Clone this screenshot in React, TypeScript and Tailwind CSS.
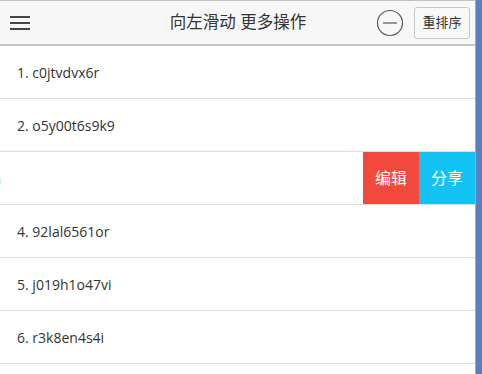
import type { ReactNode } from "react";

const items = [
  "c0jtvdvx6r",
  "o5y00t6s9k9",
  "k2m7q1x8pa",
  "92lal6561or",
  "j019h1o47vi",
  "r3k8en4s4i",
];

function Row({ children }: { children: ReactNode }) {
  return (
    <div className="relative h-[53px] overflow-hidden border-b border-[#dddddd] bg-white">
      {children}
    </div>
  );
}

export default function App() {
  return (
    <div
      className="flex h-[374px] w-[482px] bg-[#5a7fc0]"
      style={{ fontFamily: '"Open Sans", "Noto Sans", "Noto Sans CJK SC", sans-serif' }}
    >
      <div className="h-full w-[476px] overflow-hidden border-r border-[#a8a8a8] bg-white">
        <header className="flex h-[46px] items-center border-t border-b-2 border-[#c4c4c4] bg-[#f7f7f7] pl-[10px] pr-[5px]">
          <svg width="20" height="16" viewBox="0 0 20 16" className="shrink-0">
            <rect x="0" y="1" width="20" height="2" fill="#444" />
            <rect x="0" y="7" width="20" height="2" fill="#444" />
            <rect x="0" y="13" width="20" height="2" fill="#444" />
          </svg>
          <div className="flex-1 pl-[70px] text-center text-[16.5px] text-[#333]">
            向左滑动 更多操作
          </div>
          <svg width="28" height="28" viewBox="0 0 28 28" className="mr-[10px] shrink-0">
            <circle cx="14" cy="14" r="12.5" fill="none" stroke="#555" strokeWidth="1.2" />
            <line x1="7" y1="14" x2="21" y2="14" stroke="#555" strokeWidth="1.2" />
          </svg>
          <button
            type="button"
            className="h-[32px] w-[56px] rounded-[3px] border border-[#c8c8c8] bg-[#f8f8f8] text-[13px] text-[#333]"
          >
            重排序
          </button>
        </header>

        {items.map((item, i) =>
          i === 2 ? (
            <Row key={item}>
              <div className="flex h-full -translate-x-[116px] items-center pl-[17px] text-[14px] text-[#333]">
                {i + 1}. {item}
              </div>
              <div className="absolute top-0 right-0 flex h-full text-[16px] text-white">
                <div className="flex w-[56px] items-center justify-center bg-[#f2493c]">
                  编辑
                </div>
                <div className="flex w-[56px] items-center justify-center bg-[#12c2f3]">
                  分享
                </div>
              </div>
            </Row>
          ) : (
            <Row key={item}>
              <div className="flex h-full items-center pl-[17px] text-[14px] text-[#333]">
                {i + 1}. {item}
              </div>
            </Row>
          ),
        )}
      </div>
    </div>
  );
}
